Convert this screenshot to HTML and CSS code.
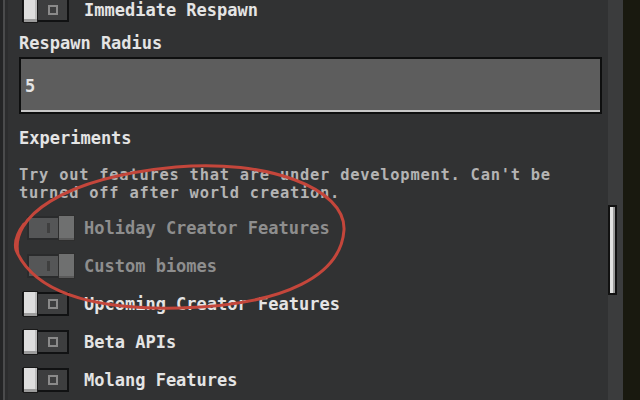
FILE: index.html
```html
<!DOCTYPE html>
<html>
<head>
<meta charset="utf-8">
<link rel="stylesheet" href="styles.css">
</head>
<body>
<div class="frame-left"></div>
<div class="panel">
  <div class="row first">
    <div class="toggle"><span class="knob"></span><span class="mark-o"></span></div>
    <span class="label">Immediate Respawn</span>
  </div>
  <div class="field-label">Respawn Radius</div>
  <div class="input"><span>5</span></div>
  <div class="section">Experiments</div>
  <div class="desc">Try out features that are under development. Can't be<br>turned off after world creation.</div>
  <div class="row">
    <div class="toggle on"><span class="bar"></span><span class="knob"></span></div>
    <span class="label dim">Holiday Creator Features</span>
  </div>
  <div class="row">
    <div class="toggle on"><span class="bar"></span><span class="knob"></span></div>
    <span class="label dim">Custom biomes</span>
  </div>
  <div class="row">
    <div class="toggle"><span class="knob"></span><span class="mark-o"></span></div>
    <span class="label">Upcoming Creator Features</span>
  </div>
  <div class="row">
    <div class="toggle"><span class="knob"></span><span class="mark-o"></span></div>
    <span class="label">Beta APIs</span>
  </div>
  <div class="row">
    <div class="toggle"><span class="knob"></span><span class="mark-o"></span></div>
    <span class="label">Molang Features</span>
  </div>
  <svg class="circle" width="360" height="330" viewBox="0 0 360 330">
    <path d="M 10 262 C 2 226, 52 186, 168 175 C 258 167, 338 196, 336 238 C 333 282, 280 313, 172 316 C 84 318, 26 300, 8 258 C 6 250, 10 240, 16 232" fill="none" stroke="#c4463b" stroke-width="3" stroke-linecap="round"/>
  </svg>
</div>
<div class="track"><div class="thumb"></div></div>
<div class="outside"></div>
</body>
</html>
```
FILE: styles.css
```css
html, body {
  margin: 0;
  padding: 0;
}
body {
  width: 640px;
  height: 400px;
  overflow: hidden;
  display: flex;
  background: #1a1a12;
  font-family: "DejaVu Sans Mono", "Liberation Mono", monospace;
  font-size: 17px;
  font-weight: bold;
  color: #e4e4e4;
}
.frame-left {
  width: 2px;
  border-left: 3px solid #242526;
  border-right: 3px solid #2c2d2e;
  background: #4a4b4c;
  flex: none;
}
.panel {
  position: relative;
  width: 583px;
  flex: none;
  background: #313233;
  padding: 0 6px 0 11px;
  display: flex;
  flex-direction: column;
}
.row {
  height: 38px;
  display: flex;
  align-items: center;
  flex: none;
}
.row.first {
  margin-top: -9px;
}
.toggle {
  display: flex;
  align-items: center;
  width: 43px;
  height: 20px;
  border: 2px solid #111213;
  background: #3d3e3f;
  margin-left: 3px;
  margin-right: 15px;
  flex: none;
}
.knob {
  width: 13px;
  height: 24px;
  flex: none;
  margin-left: -1px;
  background: #dedede;
  border: 1px solid #1a1a1a;
  box-shadow: inset 0 -3px 0 #9c9c9c, inset -2px 0 0 #bdbdbd;
}
.mark-o {
  width: 6px;
  height: 6px;
  border: 2px solid #8a8a8a;
  margin-left: 10px;
  flex: none;
}
.toggle.on {
  width: 44px;
  margin-left: 8px;
  margin-right: 9px;
  background: #555657;
  border-color: #2a2b2c;
}
.toggle.on .bar {
  width: 3px;
  height: 10px;
  background: #3f3f3f;
  margin-left: 18px;
  flex: none;
}
.toggle.on .knob {
  margin-left: auto;
  margin-right: -2px;
  width: 15px;
  background: #6f7070;
  border-color: #2e2e2e;
  box-shadow: inset 0 -2px 0 #5a5a5a;
}
.label {
  line-height: 20px;
  white-space: nowrap;
}
.label.dim {
  color: #8e8e8e;
}
.field-label {
  line-height: 20px;
  margin-top: 4px;
}
.input {
  margin-top: 4px;
  height: 52px;
  border: 2px solid #0e0f0f;
  background: #5d5d5d;
  box-shadow: inset 0 -2px 0 #c8c8c8;
  display: flex;
  align-items: center;
  padding-left: 4px;
  padding-top: 1px;
  box-sizing: content-box;
  flex: none;
}
.section {
  margin-top: 14px;
  line-height: 20px;
}
.desc {
  margin-top: 18px;
  font-size: 15.4px;
  letter-spacing: 0.77px;
  line-height: 18px;
  color: #b4b4b4;
  white-space: nowrap;
  margin-bottom: 7px;
}
.circle {
  position: absolute;
  left: 0;
  top: -8px;
  pointer-events: none;
}
.track {
  width: 15px;
  flex: none;
  background: #3b3c3d;
}
.thumb {
  margin-top: 205px;
  width: 5px;
  height: 86px;
  border: 2px solid #111;
  background: #e2e2e2;
  box-shadow: inset -2px 0 0 #9a9a9a;
}
.outside {
  flex: 1;
  background: #19190f;
}
```
